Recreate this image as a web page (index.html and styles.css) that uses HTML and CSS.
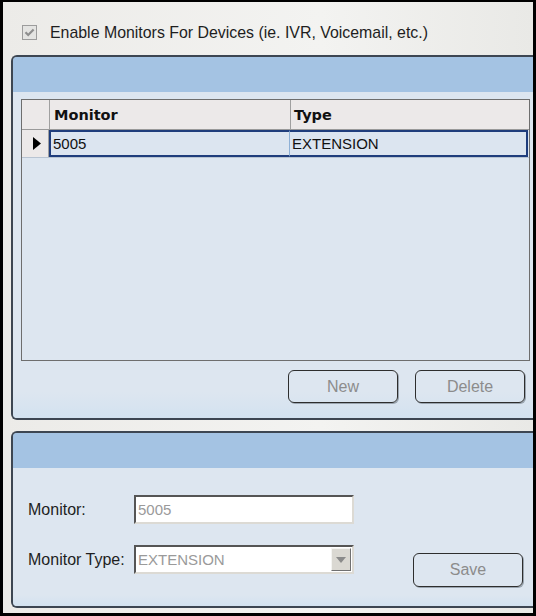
FILE: index.html
```html
<!DOCTYPE html>
<html lang="en">
<head>
  <meta charset="UTF-8" />
  <title>Device Monitors</title>
  <link rel="stylesheet" href="styles.css">
</head>
<body>
  <div class="frame">
    <label class="enable">
      <svg class="check" width="15" height="15" viewBox="0 0 15 15">
        <rect x="0.5" y="0.5" width="14" height="14" fill="#e4e4e2" stroke="#9c9c9c" />
        <path d="M3.5 7.2 L6.2 10 L11.6 4.4" fill="none" stroke="#8e8e8e" stroke-width="2.2" />
      </svg>
      <span>Enable Monitors For Devices (ie. IVR, Voicemail, etc.)</span>
    </label>

    <section class="panel">
      <div class="panel-head"></div>
      <div class="panel-body list-body">
        <div class="grid">
          <div class="grid-row grid-header">
            <div class="cell ind"></div>
            <div class="cell col-monitor">Monitor</div>
            <div class="cell col-type">Type</div>
          </div>
          <div class="grid-row grid-data selected">
            <div class="cell ind">
              <svg width="8" height="13" viewBox="0 0 8 13"><path d="M0 0 L8 6.5 L0 13 Z" fill="#000" /></svg>
            </div>
            <div class="cell col-monitor">5005</div>
            <div class="cell col-type">EXTENSION</div>
          </div>
        </div>
        <div class="actions">
          <button class="btn">New</button>
          <button class="btn">Delete</button>
        </div>
      </div>
    </section>

    <section class="panel panel-edit">
      <div class="panel-head"></div>
      <div class="panel-body edit-body">
        <div class="form">
          <div class="field">
            <span class="label">Monitor:</span>
            <div class="input">5005</div>
          </div>
          <div class="field">
            <span class="label">Monitor Type:</span>
            <div class="input combo">
              <span>EXTENSION</span>
              <span class="drop">
                <svg width="10" height="6" viewBox="0 0 10 6"><path d="M0 0 L10 0 L5 6 Z" fill="#8a8a8a" /></svg>
              </span>
            </div>
          </div>
        </div>
        <button class="btn save">Save</button>
      </div>
    </section>
  </div>
</body>
</html>
```

FILE: styles.css
```css
body {
  margin: 0;
  background: #fff;
  font-family: "Liberation Sans", Arial, sans-serif;
}

.frame {
  width: 536px;
  height: 616px;
  box-sizing: border-box;
  border: 3px solid #000;
  border-top-width: 2px;
  overflow: hidden;
  background: linear-gradient(90deg, #ecebe8 0%, #f3f3f1 60%, #e9e9e6 100%);
}

.enable {
  display: flex;
  align-items: center;
  gap: 13px;
  height: 15px;
  margin: 23px 0 0 19px;
  font-size: 15.9px;
  color: #1e1e1e;
}

.check {
  display: block;
  flex: none;
}

/* panels run out past the right edge of the frame */
.panel {
  margin: 15px 0 0 8px;
  width: 530px;
  border: 2px solid #3d4652;
  border-right: none;
  border-radius: 6px 0 0 6px;
  overflow: hidden;
  background: #dde6f0;
  box-shadow: inset 1px 1px 0 #9fb3c8;
}

.panel-head {
  height: 35px;
  background: #a4c3e3;
}

.panel-body {
  background: linear-gradient(180deg, #dde6f0 0%, #dde6f0 92%, #d3e2f0 100%);
}

.list-body {
  height: 326px;
  box-sizing: border-box;
  padding: 7px 0 0 8px;
}

.grid {
  width: 509px;
  height: 262px;
  box-sizing: border-box;
  border: 1px solid #6e6e6e;
  background: #dde6f0;
}

.grid-row {
  display: flex;
}

.cell {
  box-sizing: border-box;
  display: flex;
  align-items: center;
}

.ind {
  width: 27px;
  justify-content: center;
}

.col-monitor {
  width: 241px;
  padding-left: 4px;
}

.col-type {
  flex: 1;
  padding-left: 3px;
}

.grid-header {
  height: 29px;
  background: #ece9e9;
  border-bottom: 1px solid #9a9a9a;
  font-family: "DejaVu Sans", Verdana, sans-serif;
  font-weight: bold;
  font-size: 14.5px;
  color: #111;
}

.grid-header .cell + .cell {
  border-left: 1px solid #a0a0a0;
}

.grid-data {
  height: 27px;
  font-size: 15px;
  color: #111;
  border-bottom: 1px solid #b8c4d2;
}

.grid-data .ind {
  background: #ece9e9;
  border-right: 1px solid #a0a0a0;
  padding-left: 3px;
}

.selected .col-monitor,
.selected .col-type {
  background: #dce5f0;
  border-top: 2px solid #1f3d7c;
  border-bottom: 2px solid #1f3d7c;
  padding-left: 2px;
}

.selected .col-monitor {
  border-left: 2px solid #1f3d7c;
  border-right: 1px solid #8eb0d6;
}

.selected .col-type {
  border-right: 2px solid #1f3d7c;
  margin-right: 1px;
}

.actions {
  width: 509px;
  display: flex;
  justify-content: flex-end;
  gap: 17px;
  margin-top: 9px;
  padding-right: 5px;
  box-sizing: border-box;
}

.btn {
  width: 110px;
  height: 33px;
  border: 1.5px solid #2e2e2e;
  border-radius: 6px;
  background: transparent;
  box-shadow: 1px 1px 0 #9aa5b0;
  font-family: "Liberation Sans", Arial, sans-serif;
  font-size: 16px;
  color: #8c8c8c;
  padding: 0;
}

.panel-edit {
  margin-top: 11px;
}

.edit-body {
  height: 138px;
  box-sizing: border-box;
  display: flex;
  padding: 27px 0 0 15px;
}

.form {
  display: flex;
  flex-direction: column;
  gap: 21px;
}

.field {
  display: flex;
  align-items: center;
}

.label {
  width: 106px;
  font-size: 16px;
  color: #1e1e1e;
}

.input {
  width: 220px;
  height: 29px;
  box-sizing: border-box;
  background: #fff;
  border: 2px solid;
  border-color: #555 #dcdad4 #dcdad4 #555;
  padding-left: 2px;
  display: flex;
  align-items: center;
  font-size: 15px;
  color: #9a9a9a;
}

.combo {
  justify-content: space-between;
  padding-right: 1px;
}

.drop {
  width: 20px;
  height: 23px;
  box-sizing: border-box;
  background: #dad8d2;
  border: 1px solid;
  border-color: #f4f4f2 #707070 #707070 #f4f4f2;
  display: flex;
  align-items: center;
  justify-content: center;
}

.save {
  margin: 58px 0 0 59px;
  height: 34px;
}
```
